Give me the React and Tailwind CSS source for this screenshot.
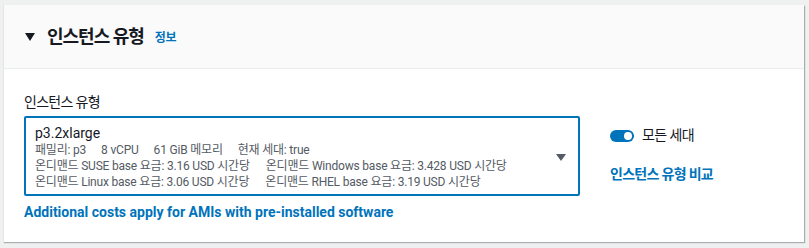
import React from "react";

const Toggle = () => (
    <div className="w-[24px] h-[12px] rounded-full bg-[#0073bb] flex items-center justify-end pr-[2px]">
        <div className="w-[8px] h-[8px] rounded-full bg-white"></div>
    </div>
);

const App = () => {
    return (
        <div className="w-[809px] h-[248px] bg-[#eff0f0] pt-[5px] pl-[3px] font-['Roboto','Noto_Sans_CJK_KR',sans-serif]">
            <div className="w-[801px] h-[237px] bg-white border-l border-[#e4e6e6] shadow-[1px_1px_1px_0_rgba(0,28,36,0.3)]">
                <div className="h-[64px] bg-[#fafafa] border-b border-[#eaeded] flex items-center pl-[21px]">
                    <svg width="10" height="8" viewBox="0 0 10 8" className="mr-[12px]">
                        <polygon points="0,0 10,0 5,8" fill="#16191f" />
                    </svg>
                    <h2 className="text-[18px] font-bold text-[#16191f] tracking-[-1px]">인스턴스 유형</h2>
                    <span className="ml-[11px] text-[12px] font-bold text-[#0073bb] pt-[2px] tracking-[-0.5px]">정보</span>
                </div>
                <div className="pl-[20px] pr-[20px] pt-[22px]">
                    <div className="text-[14px] text-[#16191f] leading-[22px] tracking-[-0.7px]">인스턴스 유형</div>
                    <div className="flex items-start mt-[3px]">
                        <div className="w-[556px] h-[80px] border-2 border-[#0073bb] rounded-[2px] flex items-center pl-[9px] pr-[12px]">
                            <div className="flex-1 pt-[1px]">
                                <div className="text-[14px] text-[#16191f] leading-[18px]">p3.2xlarge</div>
                                <div className="text-[12px] text-[#545b64] leading-[16px] tracking-[-0.2px]">
                                    <div className="flex gap-[15px]">
                                        <span>패밀리: p3</span>
                                        <span>8 vCPU</span>
                                        <span>61 GiB 메모리</span>
                                        <span>현재 세대: true</span>
                                    </div>
                                    <div className="flex gap-[16px]">
                                        <span>온디맨드 SUSE base 요금: 3.16 USD 시간당</span>
                                        <span>온디맨드 Windows base 요금: 3.428 USD 시간당</span>
                                    </div>
                                    <div className="flex gap-[16px]">
                                        <span>온디맨드 Linux base 요금: 3.06 USD 시간당</span>
                                        <span>온디맨드 RHEL base 요금: 3.19 USD 시간당</span>
                                    </div>
                                </div>
                            </div>
                            <svg width="10" height="7" viewBox="0 0 10 7" className="mt-[2px]">
                                <polygon points="0,0 10,0 5,7" fill="#545b64" />
                            </svg>
                        </div>
                        <div className="ml-[30px] pt-[9px]">
                            <div className="flex items-center gap-[8px]">
                                <Toggle />
                                <span className="text-[14px] text-[#16191f] tracking-[-0.6px]">모든 세대</span>
                            </div>
                            <div className="mt-[18px] text-[14px] font-bold text-[#0073bb] tracking-[-0.7px]">인스턴스 유형 비교</div>
                        </div>
                    </div>
                    <div className="mt-[6px] text-[14px] font-bold text-[#0073bb]">Additional costs apply for AMIs with pre-installed software</div>
                </div>
            </div>
        </div>
    );
};

export default App;
